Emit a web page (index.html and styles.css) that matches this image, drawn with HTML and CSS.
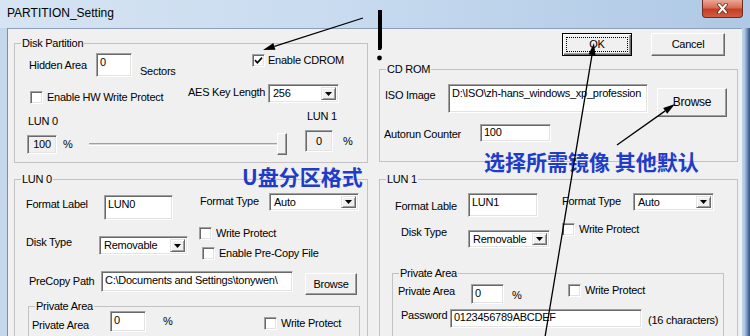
FILE: index.html
```html
<!DOCTYPE html>
<html>
<head>
<meta charset="utf-8">
<title>PARTITION_Setting</title>
<link rel="stylesheet" href="styles.css">
</head>
<body>
<div class="window">
  <div class="titlebar">
    <span class="title">PARTITION_Setting</span>
    <div class="close">
      <svg width="13" height="11" viewBox="0 0 13 11"><path d="M3 1.5 L10 9.5 M10 1.5 L3 9.5" stroke="#6a2a20" stroke-width="3.6" stroke-linecap="round"/><path d="M3 1.5 L10 9.5 M10 1.5 L3 9.5" stroke="#fff" stroke-width="2" stroke-linecap="round"/></svg>
    </div>
  </div>
  <div class="frame">
    <div class="client">
      <div class="col-left">
        <div class="group g-disk">
          <div class="legend">Disk Partition</div>
          <div class="row r-hidden">
            <span class="lbl l-hidden">Hidden Area</span>
            <div class="tb tb-hidden">0</div>
            <span class="lbl l-sectors">Sectors</span>
            <label class="chk c-cdrom"><span class="box"><svg width="9" height="9" viewBox="0 0 9 9"><path d="M1 4.2 L3.4 6.8 L8 1.6" stroke="#000" stroke-width="1.7" fill="none"/></svg></span>Enable CDROM</label>
          </div>
          <div class="row r-aes">
            <label class="chk c-hw"><span class="box"></span>Enable HW Write Protect</label>
            <span class="lbl l-aes">AES Key Length</span>
            <div class="combo cb-aes"><span class="ctext">256</span><span class="cbtn"><svg width="7" height="4" viewBox="0 0 7 4"><path d="M0 0H7L3.5 4Z"/></svg></span></div>
          </div>
          <div class="row r-lun">
            <div class="lunblock lb-0">
              <span class="lbl l-lun0">LUN 0</span>
              <div class="valrow">
                <div class="tb ro tb-100">100</div>
                <span class="lbl pct pct-0">%</span>
              </div>
            </div>
            <div class="slider"><span class="track"></span><span class="thumb"></span></div>
            <div class="lunblock lb-1">
              <span class="lbl l-lun1">LUN 1</span>
              <div class="valrow">
                <div class="tb ro tb-0">0</div>
                <span class="lbl pct pct-1">%</span>
              </div>
            </div>
          </div>
        </div>

        <div class="group g-lun0">
          <div class="legend">LUN 0</div>
          <div class="row r-l0a">
            <span class="lbl l-fl0">Format Label</span>
            <div class="tb tb-fl0">LUN0</div>
            <span class="lbl l-ft0">Format Type</span>
            <div class="combo cb-ft0"><span class="ctext">Auto</span><span class="cbtn"><svg width="7" height="4" viewBox="0 0 7 4"><path d="M0 0H7L3.5 4Z"/></svg></span></div>
          </div>
          <div class="row r-l0b">
            <span class="lbl l-dt0">Disk Type</span>
            <div class="combo cb-dt0"><span class="ctext">Removable</span><span class="cbtn"><svg width="7" height="4" viewBox="0 0 7 4"><path d="M0 0H7L3.5 4Z"/></svg></span></div>
            <div class="chkcol">
              <label class="chk c-wp0"><span class="box"></span>Write Protect</label>
              <label class="chk c-pre"><span class="box"></span>Enable Pre-Copy File</label>
            </div>
          </div>
          <div class="row r-l0c">
            <span class="lbl l-pcp">PreCopy Path</span>
            <div class="tb tb-pcp">C:\Documents and Settings\tonywen\</div>
            <div class="btn btn-pcp">Browse</div>
          </div>
          <div class="group g-pa0">
            <div class="legend">Private Area</div>
            <div class="row r-pa0">
              <span class="lbl l-pa0">Private Area</span>
              <div class="tb tb-pa0">0</div>
              <span class="lbl l-pct0">%</span>
              <label class="chk c-wpa0"><span class="box"></span>Write Protect</label>
            </div>
          </div>
        </div>
      </div>

      <div class="col-right">
        <div class="btnrow">
          <div class="btn btn-ok"><span class="focus">OK</span></div>
          <div class="btn btn-cancel">Cancel</div>
        </div>
        <div class="group g-cd">
          <div class="legend">CD ROM</div>
          <div class="row r-iso">
            <span class="lbl l-iso">ISO Image</span>
            <div class="tb tb-iso">D:\ISO\zh-hans_windows_xp_profession</div>
            <div class="btn btn-iso">Browse</div>
          </div>
          <div class="row r-auto">
            <span class="lbl l-auto">Autorun Counter</span>
            <div class="tb tb-auto">100</div>
          </div>
        </div>

        <div class="group g-lun1">
          <div class="legend">LUN 1</div>
          <div class="row r-l1a">
            <span class="lbl l-fl1">Format Lable</span>
            <div class="tb tb-fl1">LUN1</div>
            <span class="lbl l-ft1">Format Type</span>
            <div class="combo cb-ft1"><span class="ctext">Auto</span><span class="cbtn"><svg width="7" height="4" viewBox="0 0 7 4"><path d="M0 0H7L3.5 4Z"/></svg></span></div>
          </div>
          <div class="row r-l1b">
            <span class="lbl l-dt1">Disk Type</span>
            <div class="combo cb-dt1"><span class="ctext">Removable</span><span class="cbtn"><svg width="7" height="4" viewBox="0 0 7 4"><path d="M0 0H7L3.5 4Z"/></svg></span></div>
            <label class="chk c-wp1"><span class="box"></span>Write Protect</label>
          </div>
          <div class="group g-pa1">
            <div class="legend">Private Area</div>
            <div class="row r-pa1">
              <span class="lbl l-pa1">Private Area</span>
              <div class="tb tb-pa1">0</div>
              <span class="lbl l-pct1">%</span>
              <label class="chk c-wpa1"><span class="box"></span>Write Protect</label>
            </div>
            <div class="row r-pw">
              <span class="lbl l-pw">Password</span>
              <div class="tb tb-pw">0123456789ABCDEF</div>
              <span class="lbl l-16">(16 characters)</span>
            </div>
          </div>
        </div>
      </div>
    </div>
  </div>

  <div class="note note-u">U盘分区格式</div>
  <div class="note note-iso">选择所需镜像 其他默认</div>

  <svg class="overlay" width="750" height="336" viewBox="0 0 750 336">
    <path d="M378 10 H382 V48 L381 50 H378 Z" fill="#000"/>
    <circle cx="379.5" cy="58" r="2.4" fill="#000"/>
    <line x1="363" y1="18" x2="274.4" y2="46.3" stroke="#000" stroke-width="1.3"/>
    <polygon points="263,50 275.5,49.7 273.3,43" fill="#000"/>
    <line x1="545" y1="337" x2="592" y2="54.8" stroke="#000" stroke-width="1.3"/>
    <polygon points="594,43 595.5,55.4 588.6,54.2" fill="#000"/>
    <line x1="617" y1="145" x2="665.2" y2="110.9" stroke="#000" stroke-width="1.3"/>
    <polygon points="675,104 667.2,113.8 663.2,108" fill="#000"/>
  </svg>
</div>
</body>
</html>
```

FILE: styles.css
```css
* { box-sizing: border-box; }
html, body { margin: 0; padding: 0; }
body {
  width: 750px;
  height: 336px;
  overflow: hidden;
  font-family: "Liberation Sans", Arial, sans-serif;
  font-size: 11px;
  line-height: 13px;
  letter-spacing: -0.25px;
  color: #000;
  background: #bfd3ea;
}
.window {
  width: 750px;
  height: 336px;
  overflow: hidden;
  position: relative;
  background: #bfd3ea;
}
.titlebar {
  height: 28px;
  display: flex;
  align-items: flex-start;
  padding-left: 7px;
  background: linear-gradient(to right, #d6e4f3 0%, #c8dbef 45%, #aec8e5 100%);
}
.title {
  margin-top: 6px;
  font-size: 12px;
  line-height: 14px;
  letter-spacing: 0;
}
.close {
  margin-left: auto;
  margin-right: 7px;
  width: 41px;
  height: 18px;
  border: 1px solid #6e2b22;
  border-top: 0;
  border-radius: 0 0 4px 4px;
  background: linear-gradient(#eaa897 0%, #d96b53 45%, #c23e24 55%, #d45c41 100%);
  display: flex;
  align-items: center;
  justify-content: center;
}
.frame {
  display: flex;
  height: 308px;
  padding-left: 7px;
  padding-right: 8px;
  background: linear-gradient(to right, #c4d7ec 0px, #c4d7ec 742px, #a6c0de 745px, #5a7da5 748px, #2f4f78 750px);
}
.client {
  flex: 1;
  display: flex;
  align-items: flex-start;
  padding-left: 6px;
  background: #f0f0f0;
  border-left: 1px solid #7d8fa6;
  border-top: 1px solid #8da0b8;
}
.col-left { width: 354px; flex-shrink: 0; display: flex; flex-direction: column; }
.col-right { width: 359px; flex-shrink: 0; margin-left: 11px; display: flex; flex-direction: column; }

.group { border: 1px solid #c2c2c2; flex-shrink: 0; }
.legend {
  display: table;
  margin: -7px 0 0 6px;
  padding: 0 1px;
  background: #f0f0f0;
  line-height: 13px;
}
.row { display: flex; align-items: flex-start; }
.lbl { flex-shrink: 0; white-space: nowrap; }

.tb {
  flex-shrink: 0;
  background: #fff;
  border: 1px solid;
  border-color: #a0a0a0 #fff #fff #a0a0a0;
  box-shadow: inset 1px 1px #696969, inset -1px -1px #e3e3e3;
  padding: 2px 3px;
  overflow: hidden;
  white-space: nowrap;
  line-height: 13px;
}
.tb.ro {
  background: #f0f0f0;
  display: flex;
  align-items: center;
  justify-content: center;
  padding: 0;
}
.chk { display: flex; align-items: center; flex-shrink: 0; white-space: nowrap; }
.box {
  width: 13px;
  height: 13px;
  flex-shrink: 0;
  background: #fff;
  border: 1px solid;
  border-color: #a0a0a0 #fff #fff #a0a0a0;
  box-shadow: inset 1px 1px #696969, inset -1px -1px #e3e3e3;
  margin-right: 4px;
  display: flex;
  align-items: center;
  justify-content: center;
}
.combo {
  flex-shrink: 0;
  display: flex;
  background: #fff;
  border: 1px solid;
  border-color: #a0a0a0 #fff #fff #a0a0a0;
  box-shadow: inset 1px 1px #696969, inset -1px -1px #e3e3e3;
  padding: 2px;
}
.ctext { flex: 1; padding: 0 2px; line-height: 13px; overflow: hidden; white-space: nowrap; }
.cbtn {
  width: 15px;
  flex-shrink: 0;
  align-self: stretch;
  background: #f0f0f0;
  border: 1px solid;
  border-color: #e3e3e3 #696969 #696969 #e3e3e3;
  box-shadow: inset 1px 1px #fff, inset -1px -1px #a0a0a0;
  display: flex;
  align-items: center;
  justify-content: center;
}
.btn {
  flex-shrink: 0;
  display: flex;
  align-items: center;
  justify-content: center;
  background: #f0f0f0;
  border: 1px solid;
  border-color: #fff #696969 #696969 #fff;
  box-shadow: inset -1px -1px #a0a0a0;
  white-space: nowrap;
}

/* Disk partition */
.g-disk { margin-top: 14px; height: 120px; }
.r-hidden { margin-top: 3px; }
.l-hidden { margin-left: 14px; width: 67px; margin-top: 6px; }
.tb-hidden { width: 36px; height: 24px; }
.l-sectors { margin-left: 8px; width: 112px; margin-top: 12px; }
.c-cdrom { margin-top: 1px; }
.c-cdrom .box { margin-right: 3px; }
.r-aes { margin-top: 6px; }
.c-hw { margin-left: 15px; width: 158px; margin-top: 7px; }
.l-aes { width: 80px; margin-top: 2px; }
.cb-aes { width: 71px; height: 19px; }
.r-lun { margin-top: 6px; }
.lunblock { display: flex; flex-direction: column; flex-shrink: 0; }
.lb-0 { margin-left: 12px; width: 62px; }
.l-lun0 { margin-left: 1px; margin-top: 5px; }
.valrow { display: flex; align-items: center; margin-top: 7px; }
.tb-100 { width: 30px; height: 19px; }
.pct-0 { margin-left: 6px; }
.slider { width: 198px; height: 22px; margin-top: 23px; display: flex; align-items: center; flex-shrink: 0; }
.track { flex: 1; height: 3px; border-top: 1px solid #a0a0a0; border-bottom: 1px solid #fff; background: #d8d8d8; }
.thumb {
  width: 10px;
  height: 22px;
  background: #f0f0f0;
  border: 1px solid;
  border-color: #fff #696969 #696969 #fff;
  box-shadow: inset -1px -1px #a0a0a0;
}
.lb-1 { margin-left: 18px; }
.l-lun1 { margin-left: 2px; }
.tb-0 { width: 28px; height: 22px; }
.pct-1 { margin-left: 10px; }

/* LUN 0 */
.g-lun0 { margin-top: 16px; height: 200px; }
.r-l0a { margin-top: 7px; }
.l-fl0 { margin-left: 11px; width: 78px; margin-top: 5px; }
.tb-fl0 { width: 69px; height: 25px; margin-top: 2px; }
.l-ft0 { margin-left: 27px; width: 69px; margin-top: 2px; }
.cb-ft0 { width: 90px; height: 18px; }
.r-l0b { margin-top: 6px; }
.l-dt0 { margin-left: 11px; width: 73px; margin-top: 10px; }
.cb-dt0 { width: 89px; height: 19px; margin-top: 10px; }
.chkcol { display: flex; flex-direction: column; margin-left: 11px; }
.c-wp0 { margin-top: 1px; }
.c-pre { margin-left: 3px; margin-top: 7px; }
.r-l0c { margin-top: 11px; }
.l-pcp { margin-left: 14px; width: 72px; margin-top: 4px; }
.tb-pcp { width: 192px; height: 21px; }
.btn-pcp { margin-left: 12px; width: 52px; height: 22px; margin-top: 2px; }
.g-pa0 { margin-top: 11px; margin-left: 13px; width: 332px; height: 80px; }
.r-pa0 { margin-top: -2px; }
.l-pa0 { margin-left: 3px; width: 78px; margin-top: 8px; }
.tb-pa0 { width: 36px; height: 21px; }
.l-pct0 { margin-left: 17px; width: 101px; margin-top: 4px; }
.c-wpa0 { margin-top: 6px; }

/* Right column */
.btnrow { display: flex; justify-content: flex-end; padding-right: 13px; margin-top: 4px; height: 23px; }
.btn-ok {
  width: 70px;
  height: 23px;
  border: 1px solid #000;
  box-shadow: inset 1px 1px #fff, inset -1px -1px #696969, inset -2px -2px #a0a0a0;
  padding: 3px;
}
.focus {
  flex: 1;
  align-self: stretch;
  border: 1px dotted #000;
  display: flex;
  align-items: center;
  justify-content: center;
}
.btn-cancel { width: 74px; height: 23px; margin-left: 19px; }

.g-cd { margin-top: 13px; height: 93px; }
.r-iso { margin-top: 8px; }
.l-iso { margin-left: 5px; width: 63px; margin-top: 5px; }
.tb-iso { width: 200px; height: 29px; }
.btn-iso { margin-left: 9px; width: 70px; height: 29px; margin-top: 4px; font-size: 12px; }
.r-auto { margin-top: 7px; }
.l-auto { margin-left: 4px; width: 96px; margin-top: 4px; }
.tb-auto { width: 71px; height: 18px; padding-top: 1px; }

.g-lun1 { margin-top: 17px; height: 200px; }
.r-l1a { margin-top: 7px; }
.l-fl1 { margin-left: 15px; width: 73px; margin-top: 7px; }
.tb-fl1 { width: 70px; height: 24px; }
.l-ft1 { margin-left: 24px; width: 71px; margin-top: 2px; }
.cb-ft1 { width: 81px; height: 18px; }
.r-l1b { margin-top: 6px; }
.l-dt1 { margin-left: 21px; width: 67px; margin-top: 3px; }
.cb-dt1 { width: 82px; height: 18px; margin-top: 7px; }
.c-wp1 { margin-left: 12px; }
.g-pa1 { margin-top: 25px; margin-left: 12px; width: 332px; height: 80px; }
.r-pa1 { margin-top: 1px; }
.l-pa1 { margin-left: 5px; width: 73px; margin-top: 4px; }
.tb-pa1 { width: 33px; height: 20px; margin-top: 3px; }
.l-pct1 { margin-left: 8px; width: 56px; margin-top: 8px; }
.c-wpa1 { margin-top: 3px; }
.r-pw { margin-top: 5px; }
.l-pw { margin-left: 8px; width: 49px; }
.tb-pw { width: 192px; height: 19px; padding-top: 1px; }
.l-16 { margin-left: 6px; margin-top: 5px; }

/* Annotations laid over the dialog */
.note {
  position: absolute;
  font-family: "Noto Sans CJK SC", "Noto Sans", sans-serif;
  font-weight: 700;
  font-size: 21px;
  line-height: 21px;
  letter-spacing: 0;
  color: #1e3cc8;
  white-space: nowrap;
}
.note-u { left: 242px; top: 166px; }
.note-iso { left: 484px; top: 151px; }
.overlay { position: absolute; left: 0; top: 0; pointer-events: none; }
```
